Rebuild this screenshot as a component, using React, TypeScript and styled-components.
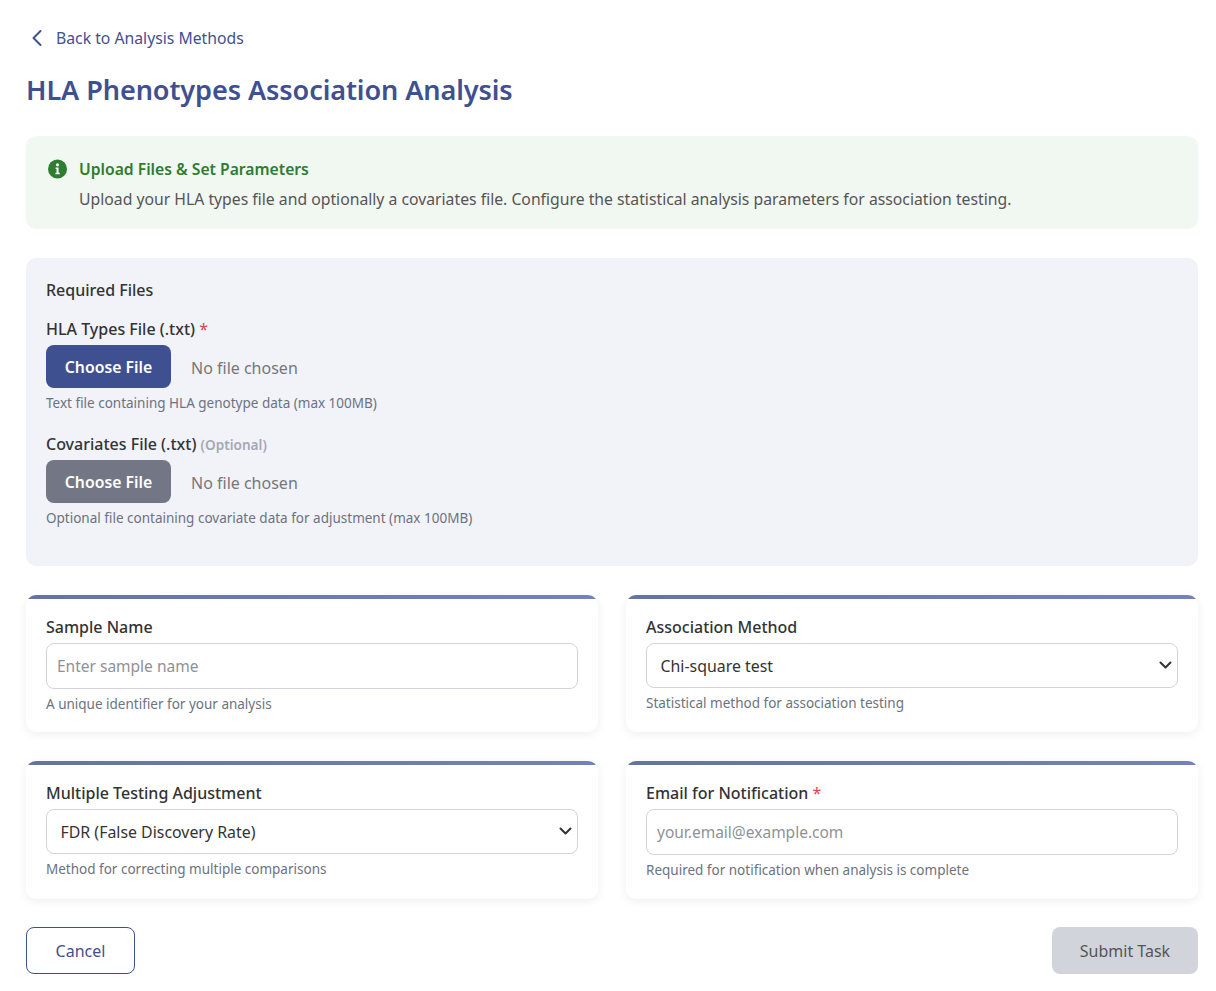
import React from 'react';
import styled, { createGlobalStyle } from 'styled-components';

const GlobalStyle = createGlobalStyle`
  * {
    box-sizing: border-box;
  }

  body {
    margin: 0;
    background: #fff;
    font-family: 'Noto Sans', 'Liberation Sans', sans-serif;
    color: #333;
  }
`;

const Page = styled.div`
  width: 1216px;
  padding: 24px 18px 17px 26px;
`;

const BackLink = styled.a`
  display: flex;
  align-items: center;
  gap: 11px;
  height: 28px;
  padding-left: 3px;
  color: #3f5091;
  font-size: 15.75px;
  text-decoration: none;
`;

const Title = styled.h1`
  margin: 17px 0 25px 0;
  height: 42px;
  color: #3f5091;
  font-size: 27.1px;
  font-weight: 600;
  line-height: 42px;
  letter-spacing: -0.1px;
`;

const Alert = styled.div`
  display: flex;
  gap: 11px;
  height: 93px;
  padding: 22px 21px 0;
  background: #f1f7f1;
  border-radius: 10px;
`;

const AlertTitle = styled.div`
  color: #2e7d32;
  font-size: 15.7px;
  font-weight: 600;
  line-height: 22px;
`;

const AlertText = styled.div`
  margin-top: 8px;
  color: #555;
  font-size: 15.75px;
  line-height: 22px;
`;

const FilesPanel = styled.section`
  height: 308px;
  margin-top: 29px;
  padding: 20px;
  background: #f1f3f9;
  border-radius: 10px;
`;

const PanelTitle = styled.div`
  color: #333;
  font-size: 16px;
  font-weight: 500;
  line-height: 24px;
  margin-bottom: 15px;
`;

const FileGroup = styled.div`
  margin-bottom: 19px;
`;

const Label = styled.label`
  display: block;
  height: 24px;
  color: #333;
  font-size: 16px;
  font-weight: 500;
  line-height: 24px;
`;

const Required = styled.span`
  color: #e53e4f;
  font-weight: 400;
`;

const Optional = styled.span`
  color: #a5a8b4;
  font-size: 13.6px;
  font-weight: 600;
`;

const FileRow = styled.div`
  display: flex;
  align-items: center;
  gap: 20px;
  margin-top: 4px;
`;

const ChooseButton = styled.button<{ $muted?: boolean }>`
  width: 125px;
  height: 43px;
  padding: 1px 0 0;
  border: none;
  border-radius: 8px;
  background: ${props => (props.$muted ? '#737785' : '#3f5091')};
  color: #fff;
  font-family: inherit;
  font-size: 15.8px;
  font-weight: 600;
`;

const NoFile = styled.span`
  padding-top: 2px;
  color: #777;
  font-size: 16px;
`;

const Hint = styled.div`
  margin-top: 6px;
  color: #6c7280;
  font-size: 13.5px;
  line-height: 19px;
`;

const CardGrid = styled.div`
  display: grid;
  grid-template-columns: 572px 572px;
  grid-template-rows: 137px 138px;
  gap: 29px 28px;
  margin-top: 29px;
`;

const Card = styled.div`
  position: relative;
  overflow: hidden;
  padding: 20px;
  background: #fff;
  border-radius: 10px;
  box-shadow: 0 2px 10px rgba(0, 0, 0, 0.07);

  &::before {
    content: '';
    position: absolute;
    top: 0;
    left: 0;
    right: 0;
    height: 4px;
    background: linear-gradient(90deg, #65739f, #7383b9);
  }
`;

const TextInput = styled.input`
  display: block;
  width: 100%;
  height: 46px;
  margin-top: 4px;
  padding: 0 10px;
  border: 1px solid #d2d3dc;
  border-radius: 8px;
  background: #fff;
  color: #333;
  font-family: inherit;
  font-size: 15.5px;

  &::placeholder {
    color: #8f9197;
    opacity: 1;
  }
`;

const SelectWrap = styled.div`
  position: relative;
  margin-top: 4px;
`;

const Select = styled.select`
  display: block;
  width: 100%;
  height: 45px;
  padding: 0 13.5px;
  appearance: none;
  border: 1px solid #d2d3dc;
  border-radius: 8px;
  background: #fff;
  color: #333;
  font-family: inherit;
  font-size: 15.9px;
`;

const Chevron = styled.svg`
  position: absolute;
  top: 17px;
  right: 6px;
  width: 13px;
  height: 10px;
  pointer-events: none;
`;

const Actions = styled.div`
  display: flex;
  justify-content: space-between;
  margin-top: 28px;
`;

const CancelButton = styled.button`
  width: 109px;
  height: 47px;
  border: 1px solid #3f5091;
  border-radius: 8px;
  background: #fff;
  color: #3f5091;
  font-family: inherit;
  font-size: 16px;
`;

const SubmitButton = styled.button`
  width: 146px;
  height: 47px;
  border: none;
  border-radius: 8px;
  background: #d2d4dc;
  color: #555;
  font-family: inherit;
  font-size: 16px;
`;

const SelectField: React.FC<{ value: string }> = ({ value }) => (
  <SelectWrap>
    <Select defaultValue={value}>
      <option>{value}</option>
    </Select>
    <Chevron viewBox="0 0 13 10" fill="none">
      <path d="M1.5 2.5 6.5 7.5 11.5 2.5" stroke="#333" strokeWidth="2" strokeLinecap="round" strokeLinejoin="round" />
    </Chevron>
  </SelectWrap>
);

const App: React.FC = () => (
  <>
    <GlobalStyle />
    <Page>
      <BackLink href="#">
        <svg width="16" height="20" viewBox="0 0 16 20" fill="none">
          <path d="M11.5 3 4.5 10 11.5 17" stroke="#3f5091" strokeWidth="2" strokeLinecap="round" strokeLinejoin="round" />
        </svg>
        Back to Analysis Methods
      </BackLink>
      <Title>HLA Phenotypes Association Analysis</Title>

      <Alert>
        <svg width="21" height="22" viewBox="0 0 21 22" style={{ flexShrink: 0 }}>
          <circle cx="10.5" cy="11" r="9.5" fill="#2e7d32" />
          <circle cx="10.5" cy="6.8" r="1.6" fill="#f1f7f1" />
          <path d="M8.6 9.5h3v5.2h1.2v1.6H8.4v-1.6h1.1v-3.6h-.9z" fill="#f1f7f1" />
        </svg>
        <div>
          <AlertTitle>Upload Files &amp; Set Parameters</AlertTitle>
          <AlertText>
            Upload your HLA types file and optionally a covariates file. Configure the statistical analysis parameters for association testing.
          </AlertText>
        </div>
      </Alert>

      <FilesPanel>
        <PanelTitle>Required Files</PanelTitle>
        <FileGroup>
          <Label>HLA Types File (.txt) <Required>*</Required></Label>
          <FileRow>
            <ChooseButton>Choose File</ChooseButton>
            <NoFile>No file chosen</NoFile>
          </FileRow>
          <Hint>Text file containing HLA genotype data (max 100MB)</Hint>
        </FileGroup>
        <FileGroup>
          <Label>Covariates File (.txt) <Optional>(Optional)</Optional></Label>
          <FileRow>
            <ChooseButton $muted>Choose File</ChooseButton>
            <NoFile>No file chosen</NoFile>
          </FileRow>
          <Hint>Optional file containing covariate data for adjustment (max 100MB)</Hint>
        </FileGroup>
      </FilesPanel>

      <CardGrid>
        <Card>
          <Label>Sample Name</Label>
          <TextInput placeholder="Enter sample name" />
          <Hint>A unique identifier for your analysis</Hint>
        </Card>
        <Card>
          <Label>Association Method</Label>
          <SelectField value="Chi-square test" />
          <Hint>Statistical method for association testing</Hint>
        </Card>
        <Card>
          <Label>Multiple Testing Adjustment</Label>
          <SelectField value="FDR (False Discovery Rate)" />
          <Hint>Method for correcting multiple comparisons</Hint>
        </Card>
        <Card>
          <Label>Email for Notification <Required>*</Required></Label>
          <TextInput placeholder="your.email@example.com" />
          <Hint>Required for notification when analysis is complete</Hint>
        </Card>
      </CardGrid>

      <Actions>
        <CancelButton>Cancel</CancelButton>
        <SubmitButton>Submit Task</SubmitButton>
      </Actions>
    </Page>
  </>
);

export default App;
